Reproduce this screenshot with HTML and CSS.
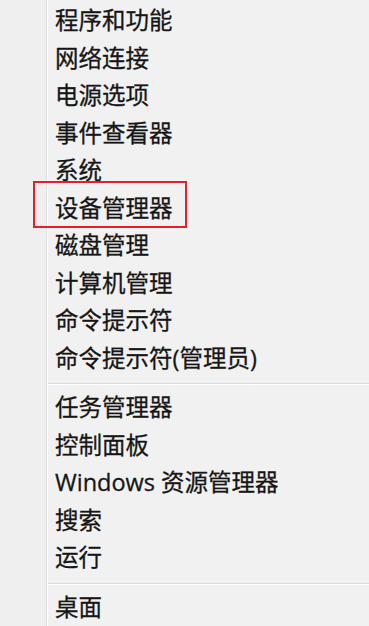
FILE: index.html
```html
<!DOCTYPE html>
<html lang="zh-CN">
<head>
<meta charset="utf-8">
<link rel="stylesheet" href="styles.css">
</head>
<body>
<div class="menu">
  <div class="gutter"></div>
  <div class="list">
    <div class="item">程序和功能</div>
    <div class="item">网络连接</div>
    <div class="item">电源选项</div>
    <div class="item">事件查看器</div>
    <div class="item">系统</div>
    <div class="item marked">设备管理器<span class="highlight"></span></div>
    <div class="item">磁盘管理</div>
    <div class="item">计算机管理</div>
    <div class="item">命令提示符</div>
    <div class="item">命令提示符(管理员)</div>
    <div class="sep"></div>
    <div class="item">任务管理器</div>
    <div class="item">控制面板</div>
    <div class="item">Windows 资源管理器</div>
    <div class="item">搜索</div>
    <div class="item">运行</div>
    <div class="sep"></div>
    <div class="item">桌面</div>
  </div>
</div>
</body>
</html>
```

FILE: styles.css
```css
html, body {
  margin: 0;
  padding: 0;
  background: #f0f0f0;
}
body {
  width: 369px;
  height: 626px;
  overflow: hidden;
  font-family: "Open Sans", "Noto Sans CJK SC", sans-serif;
  color: #161616;
}
.menu {
  display: flex;
  height: 626px;
}
.gutter {
  width: 46px;
  flex: none;
  background: #efefef;
  border-right: 1px solid #dedede;
  box-shadow: 1px 0 0 #ffffff;
}
.list {
  flex: 1;
  padding-top: 2px;
  margin-left: 1px;
  background: #f1f1f1;
}
.item {
  position: relative;
  height: 37.5px;
  line-height: 37.5px;
  padding-left: 7px;
  font-size: 23.5px;
  white-space: nowrap;
  -webkit-text-stroke: 0.3px #161616;
}
.highlight {
  position: absolute;
  left: -15px;
  top: -8.5px;
  width: 150px;
  height: 43px;
  border: 2px solid #e2202b;
}
.sep {
  height: 12px;
  box-sizing: border-box;
  padding-top: 6px;
}
.sep::before {
  content: "";
  display: block;
  height: 1px;
  background: #dcdcdc;
  box-shadow: 0 1px 0 #ffffff;
}
```
